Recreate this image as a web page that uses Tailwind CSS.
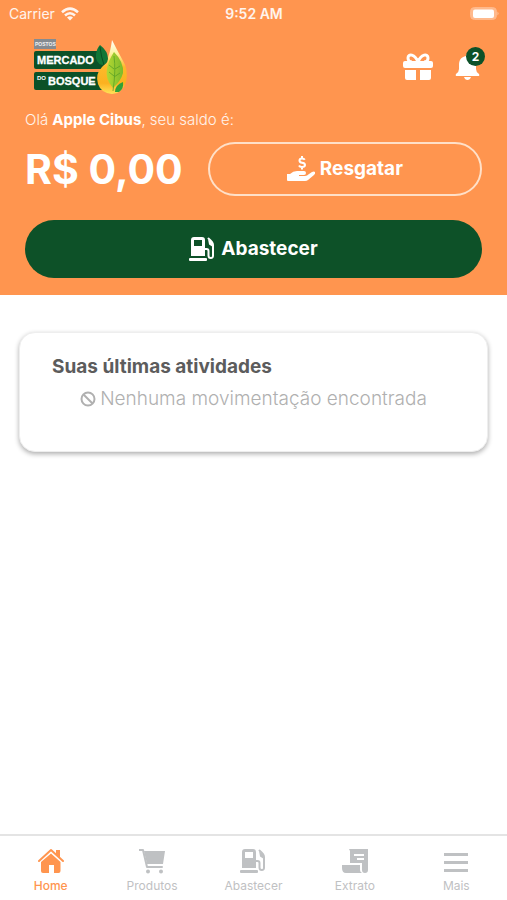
<!DOCTYPE html>
<html lang="pt-BR">
<head>
<meta charset="utf-8">
<meta name="viewport" content="width=device-width, initial-scale=1">
<title>Postos Mercado do Bosque</title>
<script src="https://cdn.jsdelivr.net/npm/@tailwindcss/browser@4"></script>
</head>
<body class="flex min-h-screen flex-col bg-white font-['Inter','Liberation_Sans',sans-serif]">
<svg class="hidden" aria-hidden="true">
  <symbol id="pump" viewBox="0 0 26 26">
    <path fill="currentColor" fill-rule="evenodd" d="M2 20V4a3 3 0 0 1 3-3h8a3 3 0 0 1 3 3v16zM5 4v6h8V4z"/>
    <rect x="0" y="22" width="18" height="3" rx="1" fill="currentColor"/>
    <path fill="none" stroke="currentColor" stroke-width="2" stroke-linecap="round" stroke-linejoin="round" d="M16 13h1.500q2 0 2 2v4.500q0 2.500 2.300 2.500T24 19.500V9q0-3-4.500-6.500"/>
    <path fill="currentColor" d="M19 3l4 3 1 5-4-2.500z"/>
  </symbol>
</svg>

<header class="bg-[#ff954f] text-white">
  <div class="grid h-7 grid-cols-3 items-center pr-2 pl-[9px] text-sm">
    <div class="flex items-center gap-[6px] text-white/90">
      <span>Carrier</span>
      <svg class="h-[14px] w-[18px]" viewBox="0 0 18 14" fill="none" stroke="currentColor" stroke-width="2.600" aria-label="Wi-Fi"><path d="M1 5.200q8-7 16 0M4 8.400q5-4.300 10 0"/><path d="M9 13.500 6 10.500q3-2.400 6 0z" fill="currentColor" stroke="none"/></svg>
    </div>
    <span class="text-center font-semibold text-white/90">9:52 AM</span>
    <svg class="h-[14px] w-[30px] justify-self-end" viewBox="0 0 30 14" aria-label="Bateria"><rect x="1.500" y=".5" width="26" height="12" rx="4" fill="#ffb98c" stroke="#ffb98c"/><rect x="4" y="2.500" width="21" height="8.500" rx="2" fill="#fff"/><path d="M28.500 4.500q2 2 0 4z" fill="#ffc7a3"/></svg>
  </div>

  <div class="flex flex-col px-[25px] pt-2 pb-[17px]">
    <div class="flex items-center justify-between">
      <svg class="ml-2 h-[62px] w-[96px]" viewBox="0 0 96 62" role="img" aria-label="Postos Mercado do Bosque">
        <defs>
          <linearGradient id="oil" x1="0" x2="0" y1="0" y2="1"><stop offset="0" stop-color="#ffffff"/><stop offset=".25" stop-color="#fff3a0"/><stop offset=".5" stop-color="#fdb92a"/><stop offset=".8" stop-color="#fbb120"/><stop offset="1" stop-color="#ffe45a"/></linearGradient>
          <linearGradient id="leaf" x1="0" x2="1"><stop offset="0" stop-color="#b5d832"/><stop offset="1" stop-color="#7cba2b"/></linearGradient>
        </defs>
        <rect x="1" y="3" width="22" height="10" fill="#858b91"/>
        <text x="2" y="10" font-family="Liberation Sans" font-weight="700" font-size="5" fill="#f2f2f2">POSTOS</text>
        <rect x="1" y="15" width="70" height="18" rx="2" fill="#0b5128"/>
        <rect x="1" y="36" width="70" height="18" rx="2" fill="#0b5128"/>
        <text x="4" y="28" font-family="Liberation Sans" font-weight="700" font-size="11" fill="#fff" stroke="#fff" stroke-width=".3">MERCADO</text>
        <text x="4" y="44" font-family="Liberation Sans" font-weight="700" font-size="6" fill="#fff">DO</text>
        <text x="15" y="49" font-family="Liberation Sans" font-weight="700" font-size="11" fill="#fff" stroke="#fff" stroke-width=".3">BOSQUE</text>
        <path d="M79 4Q84 14 89 23Q96 34 93 46Q89 58 79 58Q68 57 65 48Q62 38 69 31Q76 26 79 4Z" fill="url(#oil)"/>
        <path d="M67 9Q75 15 75 23Q74 29 69 29Q62 27 63 18Q64 12 67 9Z" fill="#117636"/>
        <path d="M67 11Q68 20 71 29" stroke="#0a4d24" fill="none"/>
        <path d="M81 16Q91 26 90 37Q88 45 80 52Q72 43 74 33Q75 25 81 16Z" fill="url(#leaf)"/>
        <path d="M81 20Q83 34 80 55M81 33l-5-4M81 40l-5-4M82 33l5-3M81 41l6-4" stroke="#5ba126" stroke-width=".8" fill="none"/>
        <path d="M90 46Q91 53 86 56L82 56Q82 49 90 46Z" fill="#31a037"/>
      </svg>
      <div class="flex items-center gap-[22px]">
        <button type="button" aria-label="Presentes">
          <svg class="h-7 w-[30px]" viewBox="0 0 30 28" fill="currentColor"><rect y="8" width="30" height="7" rx="2"/><path d="M2 17h11v10H4q-2 0-2-2zM17 17h11v8q0 2-2 2h-9z"/><path d="M15 9C12 1 5 0 5 5q0 4 4 4M15 9C18 1 25 0 25 5q0 4-4 4" fill="none" stroke="currentColor" stroke-width="3"/></svg>
        </button>
        <button type="button" aria-label="Notificações" class="relative mr-[2px]">
          <svg class="h-7 w-[25px]" viewBox="0 0 25 28" fill="currentColor"><path d="M12.500 1q1.500 0 1.500 2c5 1 7 4 7 9v4q0 3 3 5 1 2-1 2H2q-2 0-1-2 3-2 3-5v-4c0-5 2-8 7-9q0-2 1.500-2zM9 24h7q-1 3-3.500 3T9 24z"/></svg>
          <span class="absolute -top-[6px] -right-[5px] flex size-[19px] items-center justify-center rounded-full bg-[#0d5128] text-xs font-bold">2</span>
        </button>
      </div>
    </div>

    <p class="mt-3 text-[15px] leading-5 font-light text-white/90">Olá <strong class="font-bold text-white">Apple Cibus</strong>, seu saldo é:</p>

    <div class="mt-3 flex items-center gap-[25px]">
      <span class="text-[41px] leading-[54px] font-bold whitespace-nowrap">R$ 0,00</span>
      <button type="button" class="flex h-[54px] flex-1 items-center justify-center gap-[5px] rounded-full border-2 border-[#ffe0c8] text-[19px] font-bold">
        <svg class="h-[26px] w-7" viewBox="0 0 28 26" fill="currentColor" aria-hidden="true"><path d="M0 18h3q3-3 7-3h7q2 0 2 2t-2 2h-5v1h6q2 0 4-2l3-2q2-1 3 0t-1 3l-6 5q-1 1-3 1H1q-1 0-1-1z"/><path d="M17.800 3.700Q17 2.500 15 2.500 12.500 2.500 12.500 4.500t2.500 2.200Q18 7 18 9T15 11Q12.700 11 12 9.500M15 0v2.500M15 11v2.500" fill="none" stroke="currentColor" stroke-width="2"/></svg>
        <span>Resgatar</span>
      </button>
    </div>

    <button type="button" class="mt-6 flex h-[58px] items-center justify-center gap-[6px] rounded-full bg-[#0d5128] text-[19px] font-bold">
      <svg class="size-[26px]" aria-hidden="true"><use href="#pump"/></svg>
      <span>Abastecer</span>
    </button>
  </div>
</header>

<main class="flex-1 px-[19px] pt-[37px]">
  <section class="rounded-2xl border border-[#eeeeee] bg-white px-8 pt-5 pb-[38px] shadow-[0_2px_5px_rgba(0,0,0,0.32)]">
    <h1 class="text-[19px] leading-7 font-bold text-[#5c5c5c]">Suas últimas atividades</h1>
    <p class="mt-1 flex items-center justify-center gap-1 text-[19px] leading-7 font-light text-[#b0b0b0]">
      <svg class="size-4 shrink-0" viewBox="0 0 16 16" fill="none" stroke="currentColor" stroke-width="2" aria-hidden="true"><circle cx="8" cy="8" r="6.500"/><path d="m3.500 3.500 9 9"/></svg>
      <span>Nenhuma movimentação encontrada</span>
    </p>
  </section>
</main>

<nav class="grid grid-cols-5 border-t-2 border-[#e4e4e4] bg-white pt-3 pb-[6px] text-xs text-[#bfc1c3]">
  <a href="#" class="flex flex-col items-center gap-1 font-medium text-[#ff954f]">
    <svg class="size-[26px]" viewBox="0 0 26 26" fill="currentColor" aria-hidden="true"><path d="M1 13 13 2l12 11" fill="none" stroke="currentColor" stroke-width="2" stroke-linecap="round" stroke-linejoin="round"/><path d="M18 2h4v8l-4-4z"/><path d="M13 5.500 22.500 14v9q0 2-2 2H16v-8h-5v8H5q-2 0-2-2v-9z"/></svg>
    <span>Home</span>
  </a>
  <a href="#" class="flex flex-col items-center gap-1">
    <svg class="size-[26px]" viewBox="0 0 26 26" fill="currentColor" aria-hidden="true"><path d="M5 3h21l-2 13H8z"/><path d="M0 2h4l4 17h15" fill="none" stroke="currentColor" stroke-width="2" stroke-linecap="round" stroke-linejoin="round"/><circle cx="9" cy="23.500" r="2"/><circle cx="22" cy="23.500" r="2"/></svg>
    <span>Produtos</span>
  </a>
  <a href="#" class="flex flex-col items-center gap-1">
    <svg class="size-[26px]" aria-hidden="true"><use href="#pump"/></svg>
    <span>Abastecer</span>
  </a>
  <a href="#" class="flex flex-col items-center gap-1">
    <svg class="size-[26px]" viewBox="0 0 26 26" fill="currentColor" aria-hidden="true"><path fill-rule="evenodd" d="M7 1h19v21q0 3-3 3t-3-3v-7H8V3zM12 6v2h10V6zm3 4v2h7v-2z"/><path d="M0 17h18v5q0 2 2 3H4q-4 0-4-5z"/></svg>
    <span>Extrato</span>
  </a>
  <a href="#" class="flex flex-col items-center gap-1">
    <svg class="size-[26px]" viewBox="0 0 26 26" fill="currentColor" aria-hidden="true"><path d="M1 5h24v3H1zM1 13h24v3H1zM1 21h24v3H1z"/></svg>
    <span>Mais</span>
  </a>
</nav>
</body>
</html>
